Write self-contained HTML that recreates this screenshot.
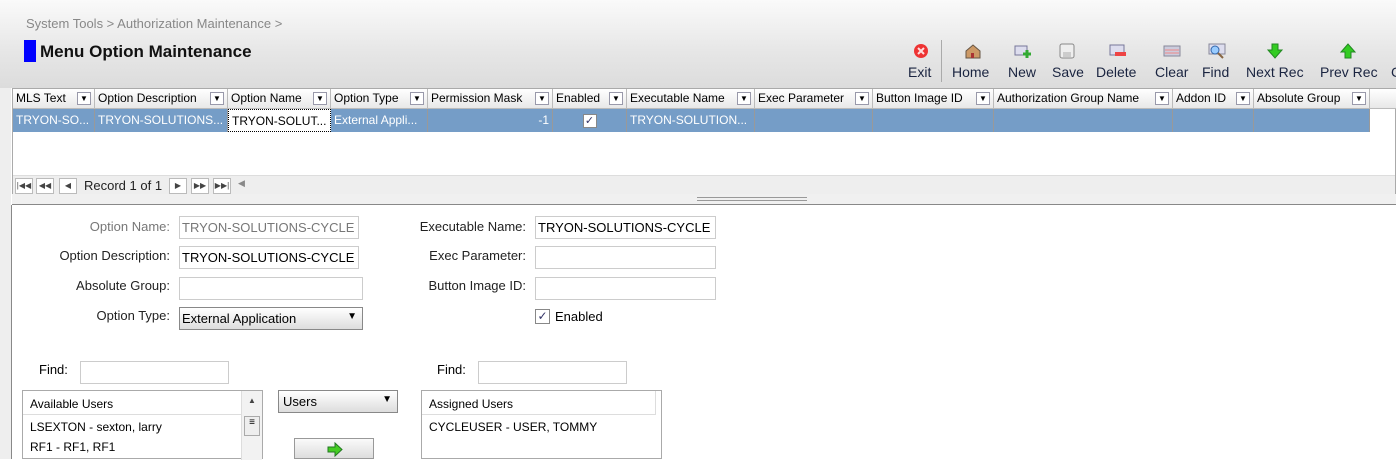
<!DOCTYPE html>
<html><head><style>
*{box-sizing:border-box;margin:0;padding:0}
body{width:1396px;height:459px;overflow:hidden;position:relative;font-family:"Liberation Sans",sans-serif;font-size:13px;background:#fff;color:#000}
.a{position:absolute}
.top{left:0;top:0;width:1396px;height:88px;background:linear-gradient(#fafafa,#e6e6e6 60%,#dcdcdc)}
.crumb{left:26px;top:16px;color:#888;font-size:13px}
.title{left:40px;top:42px;font-size:17px;font-weight:bold;color:#111}
.blue{left:24px;top:40px;width:12px;height:22px;background:#00f}
.tb{top:64px;font-size:14px;color:#1a2440;text-align:center}
.ic{top:43px;width:18px;height:16px}
.grid{left:12px;top:88px;width:1384px;height:106px;border:1px solid #aaa;background:#fff}
.hd{top:0;height:20px;background:linear-gradient(#fff,#e8e8e8);border-right:1px solid #bbb;border-bottom:1px solid #bbb;font-size:12px;padding:2px 3px;white-space:nowrap;overflow:hidden}
.hd i{position:absolute;right:3px;top:3px;width:14px;height:13px;border:1px solid #99a;background:#fff;font-style:normal;font-size:8px;text-align:center;line-height:12px}
.cl{top:20px;height:23px;background:#759dc7;border-right:1px solid #999;color:#fff;font-size:12px;padding:4px 3px;white-space:nowrap;overflow:hidden}
.nav{left:0;top:86px;width:1382px;height:19px;background:#eee;border-top:1px solid #ddd}
.nb{top:2px;width:18px;height:16px;border:1px solid #bbb;background:#fff;font-size:8px;text-align:center;line-height:14px;color:#444}
.lb{font-size:13px;color:#222;text-align:right;width:170px}
.in{height:23px;border:1px solid #ccc;background:#fff;font-size:13px;padding:3px 2px;white-space:nowrap;overflow:hidden}
</style></head><body>
<div class="a top"></div>
<div class="a crumb">System Tools &gt; Authorization Maintenance &gt;</div>
<div class="a blue"></div>
<div class="a title">Menu Option Maintenance</div>

<svg class="a ic" style="left:912px" viewBox="0 0 18 16"><circle cx="9" cy="8" r="7" fill="#e33"/><path d="M6 5l6 6M12 5l-6 6" stroke="#fdd" stroke-width="2"/></svg>
<div class="a tb" style="left:908px">Exit</div>
<div class="a" style="left:941px;top:40px;width:1px;height:42px;background:#aaa"></div>
<svg class="a ic" style="left:964px" viewBox="0 0 18 16"><path d="M2 8L9 2l7 6v7H2z" fill="#c96" stroke="#654"/><rect x="7" y="10" width="3" height="5" fill="#a33"/></svg>
<div class="a tb" style="left:952px">Home</div>
<svg class="a ic" style="left:1014px" viewBox="0 0 18 16"><rect x="1" y="3" width="12" height="9" fill="#dde" stroke="#779"/><path d="M13 7v8M9 11h8" stroke="#3a3" stroke-width="3"/></svg>
<div class="a tb" style="left:1008px">New</div>
<svg class="a ic" style="left:1058px" viewBox="0 0 18 16"><rect x="2" y="1" width="14" height="14" rx="2" fill="#eee" stroke="#888"/><rect x="5" y="9" width="8" height="5" fill="#ccc"/></svg>
<div class="a tb" style="left:1052px">Save</div>
<svg class="a ic" style="left:1109px" viewBox="0 0 18 16"><rect x="1" y="2" width="14" height="10" fill="#dde" stroke="#779"/><rect x="6" y="9" width="11" height="4" fill="#e44"/></svg>
<div class="a tb" style="left:1096px">Delete</div>
<svg class="a ic" style="left:1163px" viewBox="0 0 18 16"><rect x="1" y="3" width="16" height="10" fill="#ccd" stroke="#889"/><path d="M2 7h14M2 10h14" stroke="#e88"/></svg>
<div class="a tb" style="left:1155px">Clear</div>
<svg class="a ic" style="left:1208px" viewBox="0 0 18 16"><rect x="1" y="1" width="16" height="10" fill="#dde" stroke="#889"/><circle cx="7" cy="7" r="4" fill="#9cf" stroke="#36a"/><path d="M10 10l5 5" stroke="#864" stroke-width="2"/></svg>
<div class="a tb" style="left:1202px">Find</div>
<svg class="a ic" style="left:1266px" viewBox="0 0 18 16"><path d="M6 1h6v6h4l-7 8-7-8h4z" fill="#3c2" stroke="#282"/></svg>
<div class="a tb" style="left:1246px">Next Rec</div>
<svg class="a ic" style="left:1339px" viewBox="0 0 18 16"><path d="M6 15h6V9h4L9 1 2 9h4z" fill="#3c2" stroke="#282"/></svg>
<div class="a tb" style="left:1320px">Prev Rec</div>
<div class="a tb" style="left:1391px">C</div>

<div class="a grid">
<div class="a hd" style="left:0;width:82px">MLS Text<i>▼</i></div>
<div class="a hd" style="left:82px;width:133px">Option Description<i>▼</i></div>
<div class="a hd" style="left:215px;width:103px">Option Name<i>▼</i></div>
<div class="a hd" style="left:318px;width:97px">Option Type<i>▼</i></div>
<div class="a hd" style="left:415px;width:125px">Permission Mask<i>▼</i></div>
<div class="a hd" style="left:540px;width:74px">Enabled<i>▼</i></div>
<div class="a hd" style="left:614px;width:128px">Executable Name<i>▼</i></div>
<div class="a hd" style="left:742px;width:118px">Exec Parameter<i>▼</i></div>
<div class="a hd" style="left:860px;width:121px">Button Image ID<i>▼</i></div>
<div class="a hd" style="left:981px;width:179px">Authorization Group Name<i>▼</i></div>
<div class="a hd" style="left:1160px;width:81px">Addon ID<i>▼</i></div>
<div class="a hd" style="left:1241px;width:116px">Absolute Group<i>▼</i></div>
<div class="a hd" style="left:1357px;width:27px;border-right:0"></div>
<div class="a cl" style="left:0;width:82px">TRYON-SO...</div>
<div class="a cl" style="left:82px;width:133px">TRYON-SOLUTIONS...</div>
<div class="a cl" style="left:215px;width:103px;background:#fff;color:#000;border:1px dotted #000">TRYON-SOLUT...</div>
<div class="a cl" style="left:318px;width:97px">External Appli...</div>
<div class="a cl" style="left:415px;width:125px;text-align:right">-1</div>
<div class="a cl" style="left:540px;width:74px"><span style="display:block;margin:1px auto;width:14px;height:14px;background:#fff;border:1px solid #888;color:#336;font-size:11px;line-height:12px;text-align:center">✓</span></div>
<div class="a cl" style="left:614px;width:128px">TRYON-SOLUTION...</div>
<div class="a cl" style="left:742px;width:118px"></div>
<div class="a cl" style="left:860px;width:121px"></div>
<div class="a cl" style="left:981px;width:179px"></div>
<div class="a cl" style="left:1160px;width:81px"></div>
<div class="a cl" style="left:1241px;width:116px"></div>
<div class="a nav">
<div class="a nb" style="left:2px">|◀◀</div><div class="a nb" style="left:23px">◀◀</div><div class="a nb" style="left:46px">◀</div>
<div class="a" style="left:71px;top:2px;font-size:13px;color:#222">Record 1 of 1</div>
<div class="a nb" style="left:156px">▶</div><div class="a nb" style="left:178px">▶▶</div><div class="a nb" style="left:200px">▶▶|</div>
<div class="a" style="left:225px;top:2px;font-size:9px;color:#888">◀</div>
</div>
</div>
<div class="a" style="left:12px;top:194px;width:1384px;height:11px;background:#f0f0f0;border-bottom:1px solid #888"></div>
<div class="a" style="left:697px;top:197px;width:110px;height:4px;border-top:1px solid #999;border-bottom:1px solid #999"></div>
<div class="a" style="left:0;top:88px;width:11px;height:371px;background:#eee"></div>
<div class="a" style="left:11px;top:205px;width:1px;height:254px;background:#888"></div>

<div class="a lb" style="left:0;top:219px;color:#777">Option Name:</div>
<div class="a in" style="left:179px;top:216px;width:180px;color:#777">TRYON-SOLUTIONS-CYCLE</div>
<div class="a lb" style="left:0;top:248px">Option Description:</div>
<div class="a in" style="left:179px;top:246px;width:180px">TRYON-SOLUTIONS-CYCLE</div>
<div class="a lb" style="left:0;top:278px">Absolute Group:</div>
<div class="a in" style="left:179px;top:277px;width:184px"></div>
<div class="a lb" style="left:0;top:308px">Option Type:</div>
<div class="a in" style="left:179px;top:307px;width:184px;background:linear-gradient(#fff,#ddd);border-color:#888">External Application<span style="position:absolute;right:5px;top:3px;font-size:10px">▼</span></div>

<div class="a lb" style="left:356px;top:219px">Executable Name:</div>
<div class="a in" style="left:535px;top:216px;width:181px">TRYON-SOLUTIONS-CYCLE</div>
<div class="a lb" style="left:356px;top:248px">Exec Parameter:</div>
<div class="a in" style="left:535px;top:246px;width:181px"></div>
<div class="a lb" style="left:356px;top:278px">Button Image ID:</div>
<div class="a in" style="left:535px;top:277px;width:181px"></div>
<div class="a" style="left:535px;top:309px;width:15px;height:15px;border:1px solid #888;background:#fff;color:#336;font-size:12px;line-height:13px;text-align:center">✓</div>
<div class="a" style="left:555px;top:309px">Enabled</div>

<div class="a" style="left:39px;top:362px">Find:</div>
<div class="a in" style="left:80px;top:361px;width:149px"></div>
<div class="a" style="left:437px;top:362px">Find:</div>
<div class="a in" style="left:478px;top:361px;width:149px"></div>

<div class="a" style="left:22px;top:390px;width:241px;height:69px;border:1px solid #aaa;background:#fff">
<div class="a" style="left:0;top:0;width:218px;height:24px;border-bottom:1px solid #ddd;padding:6px 7px;font-size:12px">Available Users</div>
<div class="a" style="left:218px;top:0;width:21px;height:69px;background:#f2f2f2;border-left:1px solid #ddd"><div style="font-size:8px;text-align:center;margin-top:5px;color:#444">▲</div><div class="a" style="left:2px;top:25px;width:16px;height:20px;border:1px solid #aaa;background:#eee;font-size:10px;text-align:center">≡</div></div>
<div class="a" style="left:7px;top:29px;font-size:12px">LSEXTON - sexton, larry</div>
<div class="a" style="left:7px;top:49px;font-size:12px">RF1 - RF1, RF1</div>
</div>
<div class="a in" style="left:278px;top:390px;width:120px;height:23px;background:linear-gradient(#fff,#ddd);border-color:#888;font-size:13px;padding:3px 4px">Users<span style="position:absolute;right:5px;top:3px;font-size:10px">▼</span></div>
<div class="a" style="left:294px;top:438px;width:80px;height:21px;border:1px solid #999;background:linear-gradient(#fafafa,#ddd)"><svg class="a" style="left:31px;top:3px" width="18" height="15" viewBox="0 0 18 15"><path d="M2 5h7V1l7 6.5-7 6.5v-4H2z" fill="#4c2" stroke="#272"/></svg></div>
<div class="a" style="left:421px;top:390px;width:241px;height:69px;border:1px solid #aaa;background:#fff">
<div class="a" style="left:0;top:0;width:234px;height:24px;border-bottom:1px solid #ddd;border-right:1px solid #ddd;padding:6px 7px;font-size:12px">Assigned Users</div>
<div class="a" style="left:7px;top:29px;font-size:12px">CYCLEUSER - USER, TOMMY</div>
</div>
</body></html>
